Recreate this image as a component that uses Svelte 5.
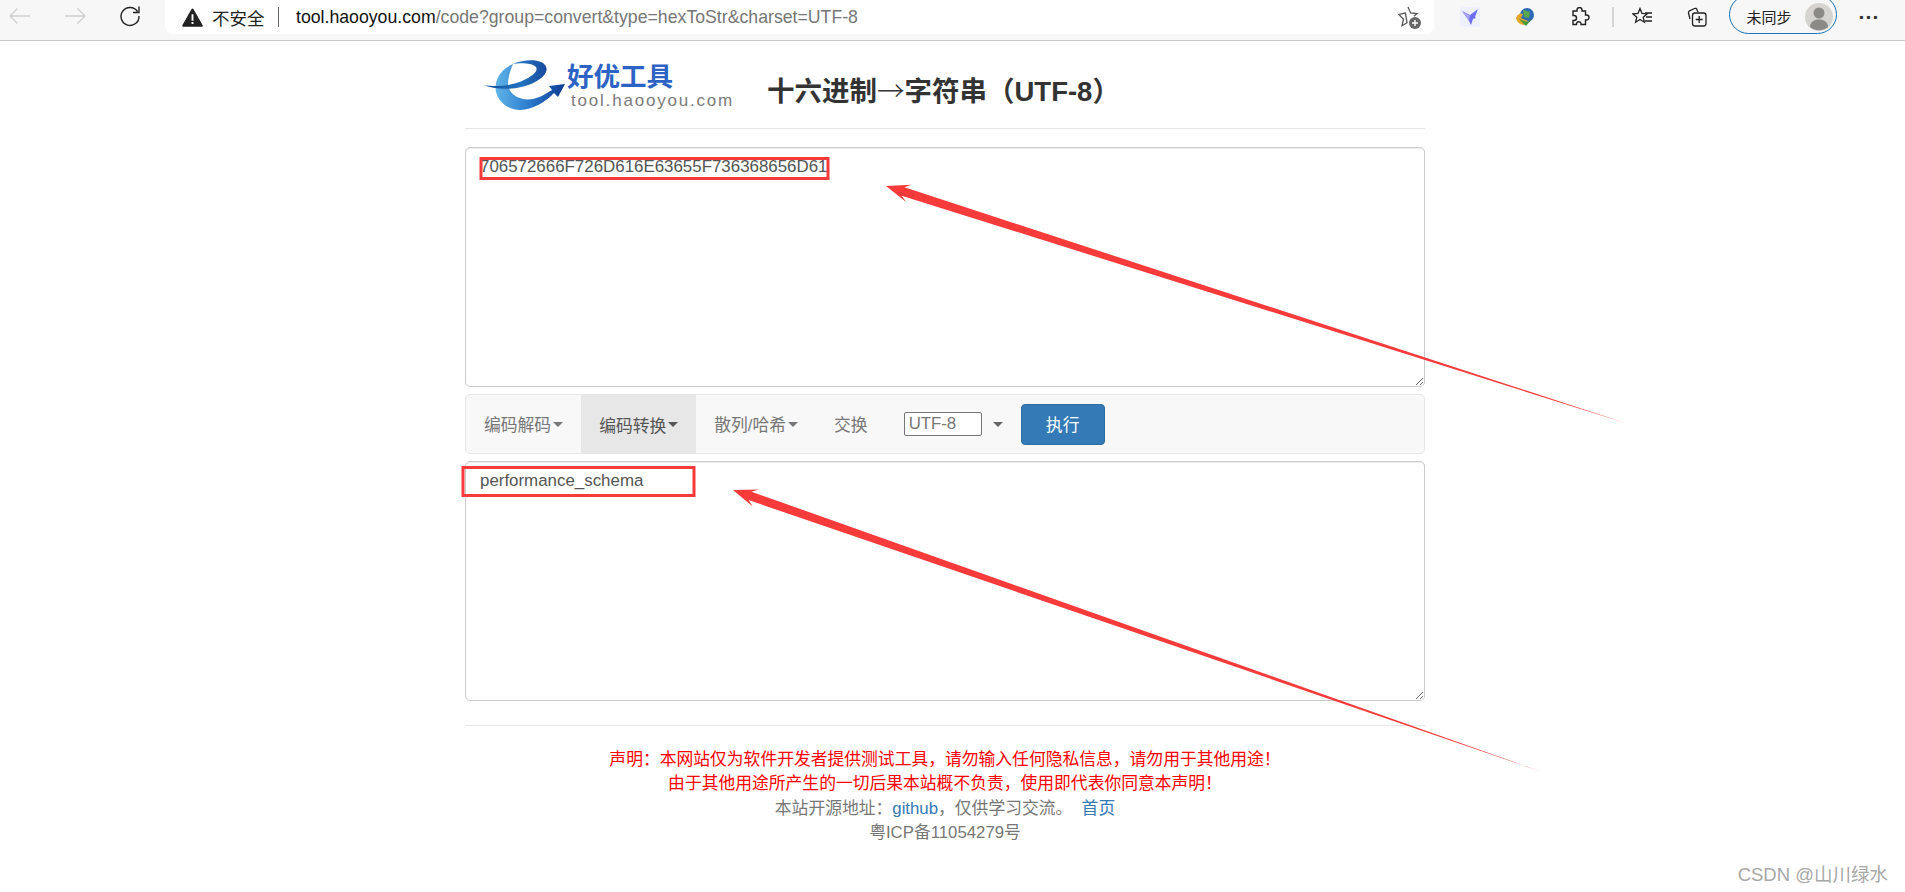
<script lang="ts">
	const hexText = '706572666F726D616E63655F736368656D61';
	const resultText = 'performance_schema';
	const menus = [
		{ label: '编码解码', caret: true, active: false },
		{ label: '编码转换', caret: true, active: true },
		{ label: '散列/哈希', caret: true, active: false },
		{ label: '交换', caret: false, active: false }
	];
</script>

<div class="browser-bar">
	<div class="nav">
		<svg class="nav-icon" viewBox="0 0 24 24"><path d="M22 12H2M9.500 4.500L2 12l7.500 7.500" fill="none" stroke="#cfcfcf" stroke-width="1.300" /></svg>
		<svg class="nav-icon" viewBox="0 0 24 24"><path d="M2 12h20M14.500 4.500L22 12l-7.500 7.500" fill="none" stroke="#cfcfcf" stroke-width="1.300" /></svg>
		<svg class="nav-icon" viewBox="0 0 24 24"><path d="M19.500 7.500A9 9 0 1 0 21 12M21 2.500v6h-6" fill="none" stroke="#222" stroke-width="1.400" /></svg>
	</div>
	<div class="address">
		<svg class="warn" viewBox="0 0 20 18"><path d="M10 1.500L18.800 16.800H1.200z" fill="#222" stroke="#222" stroke-width="2" stroke-linejoin="round" /><path d="M9.100 6h1.800v6H9.100zM9.100 13.300h1.800v1.900H9.100z" fill="#fff" /></svg>
		<span class="insecure">不安全</span>
		<span class="sep"></span>
		<span class="url"><b>tool.haooyou.com</b>/code?group=convert&amp;type=hexToStr&amp;charset=UTF-8</span>
		<svg class="star-add" viewBox="0 0 24 24">
			<path d="M10 2l2.600 6 6.400.6-3 2.700M9 17.700l-5 3 1.500-6.500L.8 9.400l6.600-1.400z" fill="none" stroke="#555" stroke-width="1.300" />
			<circle cx="17" cy="18" r="6" fill="#666" />
			<path d="M17 15v6M14 18h6" stroke="#fff" stroke-width="1.400" />
		</svg>
	</div>
	<div class="tools">
		<span class="ext bird">
			<svg viewBox="0 0 20 20"><rect width="20" height="20" rx="3" fill="#eef0fd" /><path d="M2 4l8 4 8-6-3 8 1 1-3 1-2 6-3-6z" fill="#6d6ff0" /><path d="M2 4l8 4-1 6z" fill="#a6a0f6" /></svg>
		</span>
		<span class="ext">
			<svg viewBox="0 0 20 20"><circle cx="12" cy="8" r="7" fill="#2f6bb5" /><path d="M8 3l7 2-1 6-5-1z" fill="#5aa84a" /><path d="M1 11c2-5 5-5 7-4l-2 4 7 3-4 4c-4 0-7-3-8-7z" fill="#e2a52b" /><path d="M4 12l8 3 5-3-6 7z" fill="#3f9a3f" /></svg>
		</span>
		<span class="ext">
			<svg viewBox="0 0 20 20"><path d="M7 3a2.500 2.500 0 0 1 5 0v1h3.500v4h1a2.500 2.500 0 0 1 0 5h-1v4.500H11v-1a2.300 2.300 0 0 0-4.500 0v1H3v-4h1a2.500 2.500 0 0 0 0-5H3V4h4z" fill="none" stroke="#222" stroke-width="1.400" /></svg>
		</span>
		<span class="divider"></span>
		<span class="ext">
			<svg viewBox="0 0 20 20"><path d="M8 1.500l2 5 5 .4-3.800 3.300 1.200 5-4.400-2.700L3.600 15.200l1.200-5L1 6.900l5-.4z" fill="none" stroke="#222" stroke-width="1.300" /><path d="M13 6h7M14 10h6M13 14h7" stroke="#222" stroke-width="1.300" /></svg>
		</span>
		<span class="ext">
			<svg viewBox="0 0 20 20"><path d="M3 12L1.500 6c-.2-1 .2-1.800 1-2.200l5-2.300c1-.4 2 0 2.400 1L11 5" fill="none" stroke="#222" stroke-width="1.300" /><rect x="5.500" y="6" width="13.500" height="13" rx="2.500" fill="#f7f7f7" stroke="#222" stroke-width="1.300" /><path d="M12.200 9v7M8.700 12.500h7" stroke="#222" stroke-width="1.300" /></svg>
		</span>
		<div class="profile">
			<span>未同步</span>
			<svg class="avatar" viewBox="0 0 28 28"><circle cx="14" cy="14" r="14" fill="#d6d4d0" /><circle cx="14" cy="10" r="5.500" fill="#8c8a87" /><path d="M5 24c0-5 4-7.500 9-7.500s9 2.500 9 7.500a14 14 0 0 1-18 0z" fill="#8c8a87" /></svg>
		</div>
		<span class="more">···</span>
	</div>
</div>

<div class="page">
	<div class="container">
		<header class="head">
			<div class="logo">
				<svg class="logo-e" viewBox="0 0 84 52">
					<defs>
						<linearGradient id="band" x1="0" x2="1" y1="0" y2="0">
							<stop offset="0" stop-color="#0f4a98" />
							<stop offset="0.6" stop-color="#2474c2" />
							<stop offset="1" stop-color="#174a9c" />
						</linearGradient>
						<linearGradient id="sweep" x1="0" x2="1" y1="0" y2="0">
							<stop offset="0" stop-color="#5fb4e6" />
							<stop offset="0.45" stop-color="#2f7fd0" />
							<stop offset="1" stop-color="#0c3a94" />
						</linearGradient>
					</defs>
					<path d="M30 4C16 10 11 22 13 32c3 12 16 20 29 17.500 12-2.500 22-9 29-16.500l4 4 7-13-16 2 3 4c-9 6-19 11-29 9-9-2-14-7-15-15 0-8 3-15 5-20z" fill="url(#sweep)" />
					<path d="M0 24.700c14 6.300 38 5.300 52-2.700 10-5 14-12 10-17-5-6-20-6-32-1 6-1 19-1.500 23 3 3 5-6 10.500-15 14.500-12 4.500-26 6-38 3.200z" fill="url(#band)" />
				</svg>
				<div class="logo-text">
					<span class="logo-cn">好优工具</span>
					<span class="logo-en">tool.haooyou.com</span>
				</div>
			</div>
			<h1>十六进制<span class="arrow">→</span>字符串（UTF-8）</h1>
		</header>

		<textarea class="box" readonly value={hexText}></textarea>

		<nav class="toolbar">
			{#each menus as m}
				<span class="menu" class:active={m.active}>{m.label}{#if m.caret}<i class="caret"></i>{/if}</span>
			{/each}
			<span class="charset">UTF-8</span>
			<i class="caret select-caret"></i>
			<button class="run">执行</button>
		</nav>

		<textarea class="box" readonly value={resultText}></textarea>

		<footer class="foot">
			<p class="warn-text">声明：本网站仅为软件开发者提供测试工具，请勿输入任何隐私信息，请勿用于其他用途！</p>
			<p class="warn-text">由于其他用途所产生的一切后果本站概不负责，使用即代表你同意本声明！</p>
			<p>本站开源地址：<a href="#top">github</a>，仅供学习交流。 &nbsp;<a href="#top">首页</a></p>
			<p>粤ICP备11054279号</p>
		</footer>
	</div>
</div>

<!-- screenshot annotations drawn on top of the page -->
<svg class="marks" viewBox="0 0 1905 892">
	<rect x="481" y="158.500" width="347" height="20" fill="none" stroke="#f73b3b" stroke-width="3" />
	<rect x="463" y="467.500" width="231" height="28" fill="none" stroke="#f73b3b" stroke-width="3" />
	<polygon points="886,186 911.500,184.700 904.500,187.300 1627,423.500 901.700,195.700 906.100,201.900" fill="#f73b3b" />
	<polygon points="733,490 758.700,489.400 751.500,491.700 1541,771.500 748.600,500.100 752.700,506.400" fill="#f73b3b" />
</svg>
<span class="watermark">CSDN @山川绿水</span>

<style>
	:global(body) {
		margin: 0;
		background: #fff;
		overflow: hidden;
		font-family: 'Liberation Sans', 'Noto Sans CJK SC', sans-serif;
	}

	.browser-bar {
		display: flex;
		align-items: flex-start;
		height: 40px;
		background: #f7f7f7;
		border-bottom: 1px solid #c6c6c6;
	}

	.nav {
		display: flex;
		align-items: center;
		width: 165px;
		height: 32px;
		padding-left: 8px;
		gap: 31px;
		box-sizing: border-box;
	}

	.nav-icon {
		width: 24px;
		height: 24px;
	}

	.address {
		display: flex;
		align-items: center;
		width: 1269px;
		height: 34px;
		padding: 0 12px 0 17px;
		box-sizing: border-box;
		background: #fff;
		border-radius: 0 0 8px 8px;
		color: #767676;
	}

	.warn {
		width: 21px;
		height: 19px;
		margin-right: 9px;
	}

	.insecure {
		color: #222;
		font-size: 17.500px;
	}

	.sep {
		width: 1.500px;
		height: 20px;
		background: #666;
		margin: 0 17px 0 13px;
	}

	.url {
		flex: 1;
		font-size: 17.700px;
		white-space: nowrap;
	}

	.url b {
		font-weight: 400;
		color: #111;
	}

	.star-add {
		width: 24px;
		height: 24px;
	}

	.tools {
		display: flex;
		align-items: center;
		height: 33px;
		flex: 1;
		padding-left: 26px;
	}

	.ext {
		display: flex;
		width: 20px;
		height: 20px;
		margin-right: 35px;
	}

	.ext svg {
		width: 20px;
		height: 20px;
	}

	.divider {
		width: 1.500px;
		height: 20px;
		background: #d4d4d4;
		margin: 0 18px 0 -13px;
	}

	.profile {
		display: flex;
		align-items: center;
		justify-content: space-between;
		width: 108px;
		height: 39px;
		margin: -4px 0 0 -13px;
		padding: 4px 3px 0 17px;
		box-sizing: border-box;
		border: 1.500px solid #1a73b8;
		border-radius: 20px;
		font-size: 15px;
		color: #222;
	}

	.avatar {
		width: 28px;
		height: 28px;
	}

	.more {
		margin-left: 22px;
		font-size: 21px;
		font-weight: 700;
		color: #333;
	}

	.page {
		padding-right: 15px;
	}

	.container {
		width: 960px;
		margin: 0 auto;
	}

	.head {
		display: flex;
		align-items: center;
		height: 87px;
		border-bottom: 1px solid #e6e6e6;
		margin-bottom: 18px;
		padding-left: 18px;
	}

	.logo {
		display: flex;
		align-items: flex-start;
		width: 286px;
		height: 52px;
		margin-top: 3px;
	}

	.logo-e {
		width: 84px;
		height: 52px;
		flex-shrink: 0;
	}

	.logo-text {
		display: flex;
		flex-direction: column;
		margin-top: 3px;
	}

	.logo-cn {
		font-size: 26.500px;
		line-height: 29px;
		font-weight: 700;
		color: #2c63c4;
	}

	.logo-en {
		font-size: 17px;
		line-height: 17px;
		margin-left: 4px;
		letter-spacing: 1.800px;
		color: #7b7b7b;
		white-space: nowrap;
	}

	h1 {
		margin: 9px 0 0 -2px;
		font-size: 27.500px;
		font-weight: 700;
		color: #333;
		white-space: nowrap;
	}

	.arrow {
		font-family: 'Noto Sans CJK SC', sans-serif;
		font-weight: 300;
	}

	.box {
		display: block;
		width: 100%;
		height: 240px;
		margin: 0;
		padding: 8px 14px;
		box-sizing: border-box;
		border: 1.500px solid #ccc;
		border-radius: 5px;
		box-shadow: inset 0 1px 1px rgba(0, 0, 0, 0.075);
		font-family: inherit;
		font-size: 16.900px;
		line-height: 1.300;
		color: #555;
		outline: none;
	}

	.toolbar {
		display: flex;
		align-items: center;
		height: 60px;
		margin: 7px 0;
		box-sizing: border-box;
		background: #f8f8f8;
		border: 1px solid #e7e7e7;
		border-radius: 5px;
		font-size: 16.800px;
		color: #777;
	}

	.menu {
		display: flex;
		align-items: center;
		align-self: stretch;
		padding: 0 18px;
		white-space: nowrap;
	}

	.menu.active {
		margin-bottom: -1px;
		background: #e7e7e7;
		color: #555;
	}

	.caret {
		display: inline-block;
		width: 0;
		height: 0;
		margin-left: 2px;
		border-top: 5px solid currentColor;
		border-left: 5px solid transparent;
		border-right: 5px solid transparent;
	}

	.charset {
		width: 78px;
		height: 24px;
		margin-left: 18px;
		padding-left: 4px;
		box-sizing: border-box;
		border: 1px solid #767676;
		border-radius: 2px;
		background: #fff;
		line-height: 22px;
	}

	.select-caret {
		margin-left: 11px;
		color: #666;
	}

	.run {
		width: 84px;
		height: 41px;
		margin-left: 18px;
		padding: 0;
		background: #337ab7;
		border: 1px solid #2e6da4;
		border-radius: 4px;
		color: #fff;
		font: inherit;
		cursor: pointer;
	}

	.foot {
		margin-top: 24px;
		padding-top: 22px;
		border-top: 1px solid #e6e6e6;
		text-align: center;
		font-size: 16.800px;
		line-height: 24.300px;
		color: #777;
	}

	.foot p {
		margin: 0;
	}

	.warn-text {
		color: #f00;
	}

	.foot a {
		color: #337ab7;
		text-decoration: none;
	}

	.marks {
		position: absolute;
		top: 0;
		left: 0;
		width: 1905px;
		height: 892px;
		pointer-events: none;
	}

	.watermark {
		position: absolute;
		right: 17px;
		top: 860px;
		font-size: 18.500px;
		color: #a8a8a8;
	}
</style>
